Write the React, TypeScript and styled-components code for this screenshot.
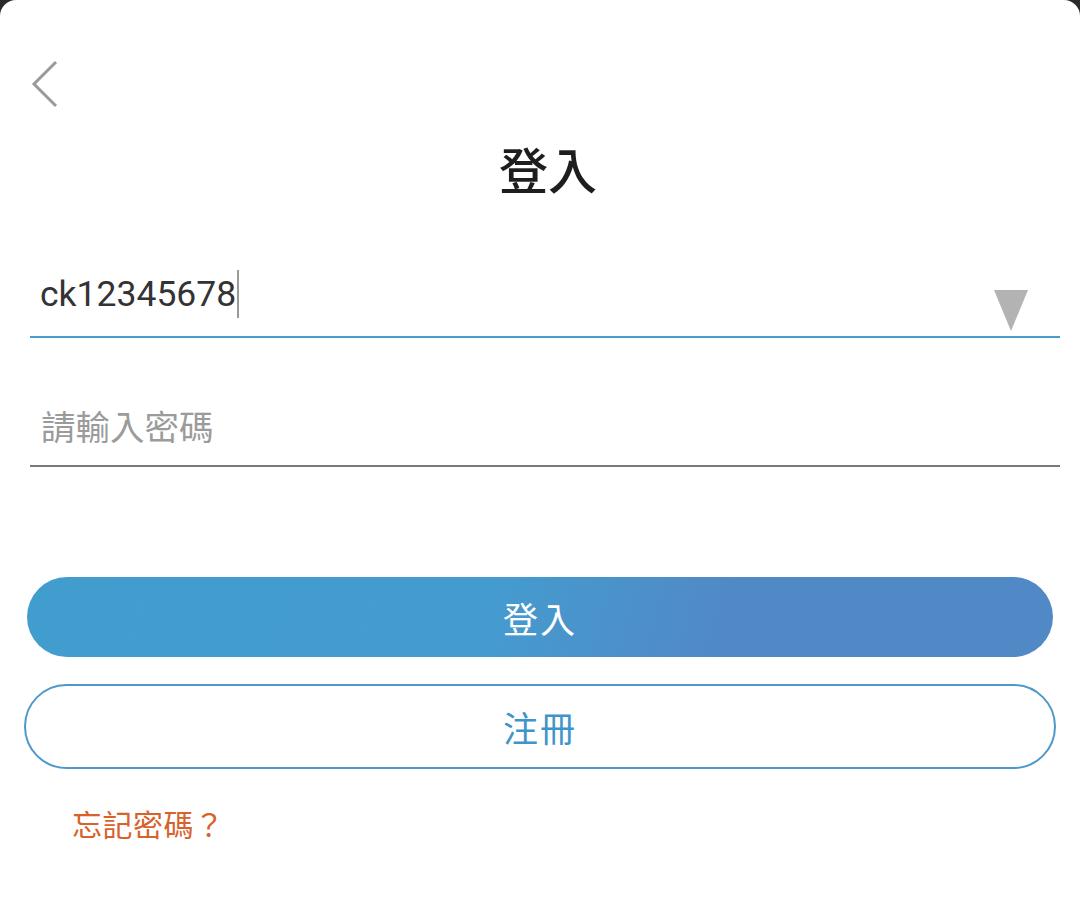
import React from "react";
import styled, { createGlobalStyle } from "styled-components";

const Global = createGlobalStyle`
  html, body { margin: 0; padding: 0; background: #2a2a2a; }
  body { font-family: Roboto, "Noto Sans CJK TC", sans-serif; }
  * { box-sizing: border-box; }
`;

const Card = styled.div`
  width: 1080px;
  height: 920px;
  background: #ffffff;
  border-radius: 16px 16px 0 0;
  display: flex;
  flex-direction: column;
`;

const TopBar = styled.div`
  height: 130px;
  padding: 60px 0 0 30px;
`;

const BackBtn = styled.button`
  border: none;
  background: none;
  padding: 0;
  width: 30px;
  height: 48px;
  cursor: pointer;
  display: block;
`;

const Title = styled.h1`
  margin: 0;
  text-align: center;
  font-family: "Noto Sans CJK TC", sans-serif;
  font-size: 49px;
  font-weight: 500;
  color: #1e1e1e;
  line-height: 76px;
  padding-left: 16px;
`;

const Form = styled.div`
  display: flex;
  flex-direction: column;
  padding: 0 20px 0 30px;
  margin-top: 24px;
`;

const Field = styled.div<{ $active?: boolean }>`
  height: 129px;
  border-bottom: 2px solid ${(p) => (p.$active ? "#4b9bd0" : "#7a7a7a")};
  display: flex;
  align-items: flex-end;
  justify-content: space-between;
  padding: 0 0 0 10px;
  position: relative;
`;

const FirstField = styled(Field)`
  height: 108px;
`;

const Value = styled.div`
  font-family: Roboto, "Noto Sans CJK TC", sans-serif;
  font-size: 35.5px;
  color: #333333;
  line-height: 48px;
  margin-bottom: 18px;
  display: flex;
  align-items: center;
`;

const Caret = styled.span`
  display: inline-block;
  width: 2px;
  height: 48px;
  background: #9a9a9a;
  margin-left: 1px;
`;

const Placeholder = styled.div`
  font-family: "Noto Sans CJK TC", sans-serif;
  font-size: 34.5px;
  color: #9b9b9b;
  line-height: 48px;
  margin-bottom: 16px;
  margin-left: 1px;
`;

const Triangle = styled.div`
  width: 0;
  height: 0;
  border-left: 17px solid transparent;
  border-right: 17px solid transparent;
  border-top: 41px solid #b3b3b3;
  margin: 0 32px 5px 0;
`;

const Buttons = styled.div`
  display: flex;
  flex-direction: column;
  padding: 0 24px;
  margin-top: 110px;
`;

const Primary = styled.button`
  height: 80px;
  margin: 0 3px;
  border: none;
  border-radius: 40px;
  background: linear-gradient(105deg, #429dcf 0%, #449bcf 45%, #5189c6 68%, #5188c6 100%);
  color: #ffffff;
  font-family: "Noto Sans CJK TC", sans-serif;
  font-size: 35px;
  letter-spacing: 2px;
  cursor: pointer;
`;

const Secondary = styled.button`
  height: 85px;
  margin-top: 27px;
  border: 2px solid #4e99ca;
  border-radius: 43px;
  background: #ffffff;
  color: #3f95c9;
  font-family: "Noto Sans CJK TC", sans-serif;
  font-size: 35px;
  letter-spacing: 2px;
  cursor: pointer;
`;

const Forgot = styled.a`
  display: block;
  margin: 34px 0 0 72px;
  font-family: "Noto Sans CJK TC", sans-serif;
  font-size: 30px;
  color: #d8622b;
  text-decoration: none;
  line-height: 40px;
  letter-spacing: 0.5px;
`;

export default function App() {
  return (
    <>
      <Global />
      <Card>
        <TopBar>
          <BackBtn aria-label="back">
            <svg width="30" height="48" viewBox="0 0 30 48">
              <polyline
                points="26,2 4,24 26,46"
                fill="none"
                stroke="#9a9a9a"
                strokeWidth="3"
              />
            </svg>
          </BackBtn>
        </TopBar>
        <Title>登入</Title>
        <Form>
          <FirstField $active>
            <Value>
              ck12345678
              <Caret />
            </Value>
            <Triangle />
          </FirstField>
          <Field>
            <Placeholder>請輸入密碼</Placeholder>
          </Field>
        </Form>
        <Buttons>
          <Primary>登入</Primary>
          <Secondary>注冊</Secondary>
        </Buttons>
        <Forgot>忘記密碼？</Forgot>
      </Card>
    </>
  );
}
